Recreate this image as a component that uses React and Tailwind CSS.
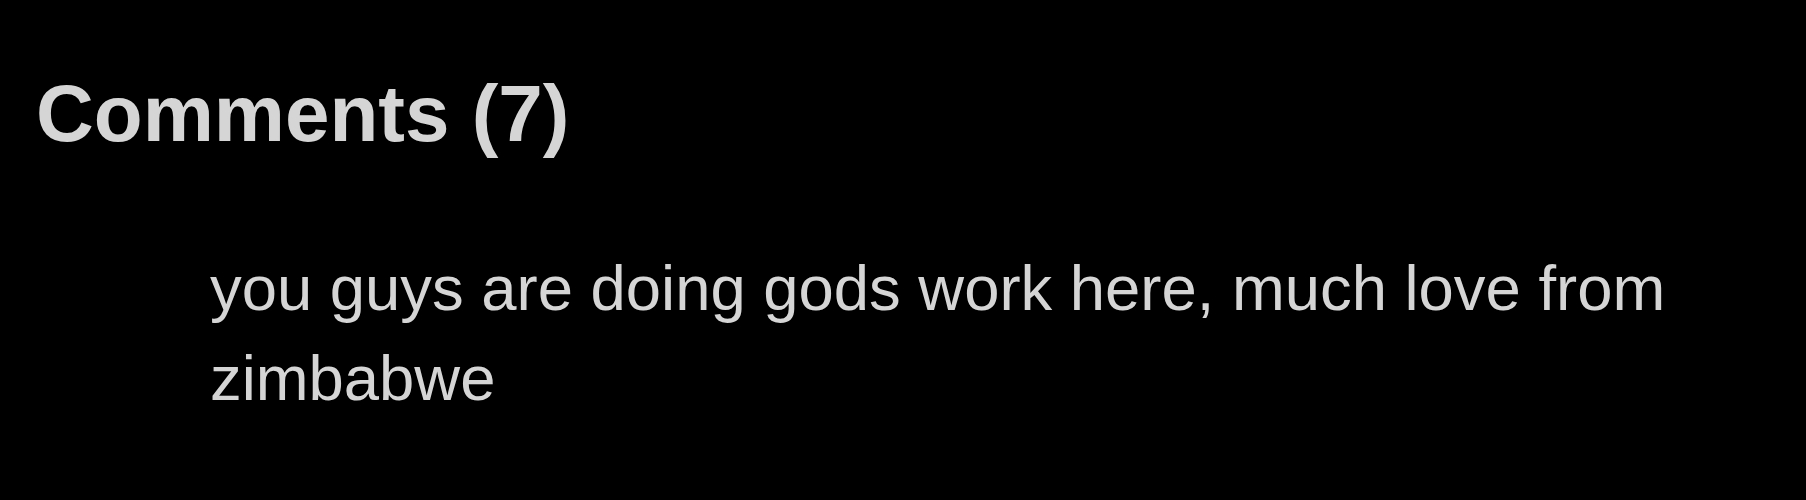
export default function App() {
  return (
    <div className="w-[1806px] h-[500px] bg-black overflow-hidden" style={{ fontFamily: '"Liberation Sans", Arial, sans-serif' }}>
      <h2 className="pt-[74px] pl-[36px] text-[80px] leading-[80px] font-bold text-[#d5d5d5]">Comments (7)</h2>
      <p className="mt-[89px] ml-[210px] w-[1500px] text-[63.4px] leading-[90px] text-[#d5d5d5]">
        you guys are doing gods work here, much love from zimbabwe
      </p>
    </div>
  );
}
